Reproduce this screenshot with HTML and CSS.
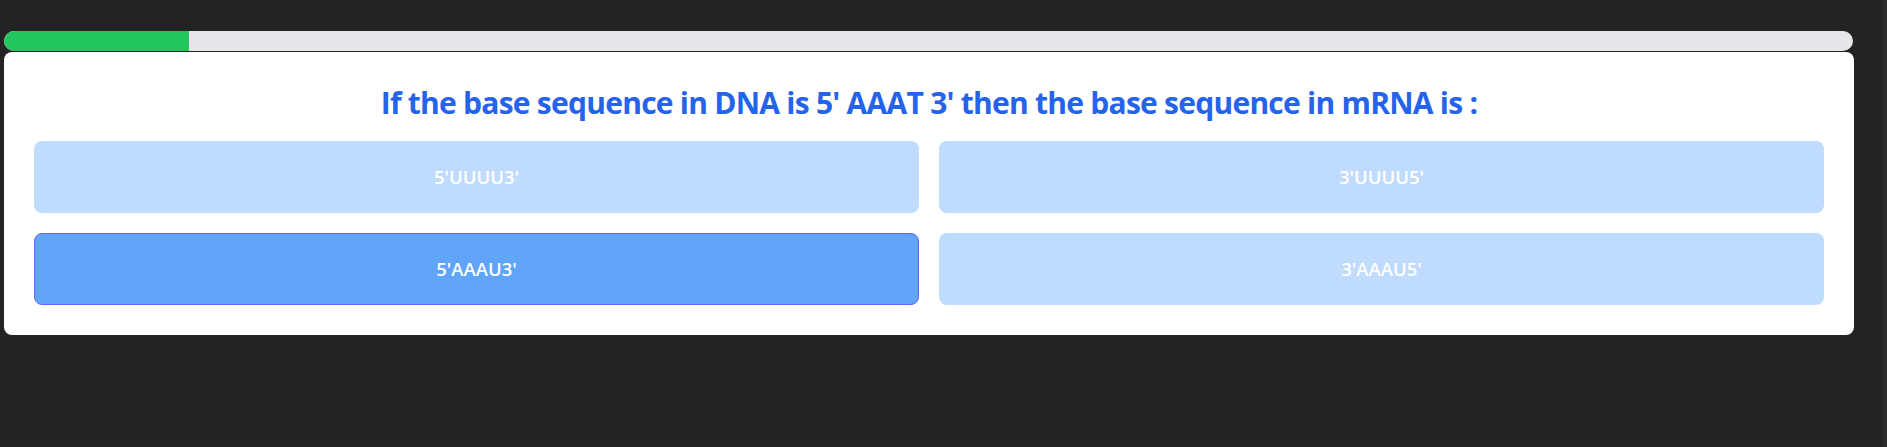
FILE: index.html
```html
<!DOCTYPE html>
<html lang="en">
<head>
<meta charset="utf-8">
<title>Quiz</title>
<link rel="stylesheet" href="styles.css">
</head>
<body>
<div class="page">
  <div class="quiz">
    <div class="progress"><div class="progress-fill" style="width:10%"></div></div>
    <div class="card">
      <h1 class="question">If the base sequence in DNA is 5' AAAT 3' then the base sequence in mRNA is :</h1>
      <div class="options">
        <button class="option">5'UUUU3'</button>
        <button class="option">3'UUUU5'</button>
        <button class="option selected">5'AAAU3'</button>
        <button class="option">3'AAAU5'</button>
      </div>
    </div>
  </div>
  <div class="edge"></div>
</div>
</body>
</html>
```

FILE: styles.css
```css
html, body {
  margin: 0;
  padding: 0;
  background: #232323;
  height: 100%;
}
body {
  font-family: "Open Sans", "Noto Sans", "Liberation Sans", sans-serif;
}
.page {
  display: flex;
  height: 447px;
}
.quiz {
  flex: 1;
  padding: 31px 29px 0 4px;
}
.edge {
  width: 4px;
  background: #2b2b2b;
}
.progress {
  height: 20px;
  background: #e5e7eb;
  border-radius: 10px;
  overflow: hidden;
  margin-right: 1px;
}
.progress-fill {
  height: 100%;
  background: #22c55e;
  border-radius: 10px 0 0 10px;
}
.card {
  margin-top: 1px;
  background: #ffffff;
  border-radius: 8px;
  padding: 33px 30px 30px 30px;
}
.question {
  margin: 0 0 20px 0;
  text-align: center;
  color: #2563eb;
  font-size: 30px;
  line-height: 36px;
  font-weight: 700;
  letter-spacing: -0.75px;
}
.options {
  display: grid;
  grid-template-columns: 1fr 1fr;
  gap: 20px;
}
.option {
  height: 72px;
  border: 1px solid transparent;
  border-radius: 8px;
  background: #bfdbfe;
  color: #ffffff;
  font-family: "Open Sans", "Noto Sans", "Liberation Sans", sans-serif;
  font-size: 18.5px;
  font-weight: 600;
  line-height: 28px;
  padding: 0;
  text-align: center;
}
.option.selected {
  background: #60a5fa;
  border-color: #6366f1;
}
```
